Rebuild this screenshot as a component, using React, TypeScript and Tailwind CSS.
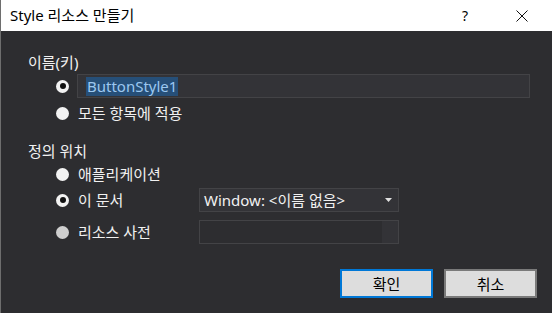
import React from 'react';

const font = { fontFamily: '"Noto Sans", "Noto Sans CJK KR", sans-serif' };

function Radio({ state }: { state: 'on' | 'off' | 'disabled' }) {
  const bg = state === 'disabled' ? 'bg-[#cfcfcf]' : 'bg-[#f3f3f3]';
  return (
    <span className={`flex h-[13px] w-[13px] shrink-0 items-center justify-center rounded-full ${bg}`}>
      {state === 'on' && <span className="h-[6px] w-[6px] rounded-full bg-[#111]" />}
    </span>
  );
}

export default function App() {
  return (
    <div
      className="flex h-[313px] w-[552px] flex-col overflow-hidden border-l border-[#6e6e6e] bg-[#2d2d30] text-[15px] text-[#f1f1f1]"
      style={font}
    >
      <div className="flex h-[31px] shrink-0 items-center bg-white pl-[9px] text-[15px] text-black">
        <span>Style 리소스 만들기</span>
        <span className="ml-auto mr-[48px] text-[14px]">?</span>
        <svg width="12" height="12" viewBox="0 0 12 12" className="mr-[24px]">
          <path d="M0.5 0.5 L11.5 11.5 M11.5 0.5 L0.5 11.5" stroke="#111" strokeWidth="1" />
        </svg>
      </div>

      <div className="flex flex-1 flex-col pl-[27px] pt-[22px]">
        <div className="leading-[18px]">이름(키)</div>
        <div className="mt-[3px] flex h-[24px] items-center pl-[28px]">
          <Radio state="on" />
          <div className="ml-[8px] flex h-[24px] w-[453px] items-center border border-[#434346] bg-[#333337] pl-[8px]">
            <span className="bg-[#264f78] px-[1px] leading-[19px] text-[#9cc8f0]">ButtonStyle1</span>
          </div>
        </div>
        <div className="mt-[4px] flex h-[22px] items-center pl-[28px]">
          <Radio state="off" />
          <span className="ml-[9px] leading-[18px]">모든 항목에 적용</span>
        </div>

        <div className="mt-[18px] leading-[18px]">정의 위치</div>
        <div className="mt-[4px] flex h-[20px] items-center pl-[28px]">
          <Radio state="off" />
          <span className="ml-[9px] leading-[18px]">애플리케이션</span>
        </div>
        <div className="mt-[4px] flex h-[24px] items-center pl-[28px]">
          <Radio state="on" />
          <span className="ml-[9px] w-[121px] leading-[18px]">이 문서</span>
          <div className="flex h-[24px] w-[200px] items-center border border-[#434346] bg-[#333337] pl-[4px] pr-[6px]">
            <span className="leading-[18px]">Window: &lt;이름 없음&gt;</span>
            <svg width="7" height="4" viewBox="0 0 7 4" className="ml-auto">
              <path d="M0 0 H7 L3.5 4 Z" fill="#e0e0e0" />
            </svg>
          </div>
        </div>
        <div className="mt-[8px] flex h-[24px] items-center pl-[28px]">
          <Radio state="disabled" />
          <span className="ml-[9px] w-[121px] leading-[18px]">리소스 사전</span>
          <div className="flex h-[24px] w-[200px] border border-[#434346] bg-[#2d2d30]">
            <div className="flex-1" />
            <div className="w-[16px] bg-[#333337]" />
          </div>
        </div>

        <div className="mt-[25px] flex gap-[11px] pl-[312px] text-[15px] text-black">
          <button className="h-[29px] w-[93px] border-2 border-[#0078d7] bg-[#dddddd] leading-[18px]">확인</button>
          <button className="h-[29px] w-[93px] border-2 border-[#7a7a7a] bg-[#dddddd] leading-[18px]">취소</button>
        </div>
      </div>
    </div>
  );
}
